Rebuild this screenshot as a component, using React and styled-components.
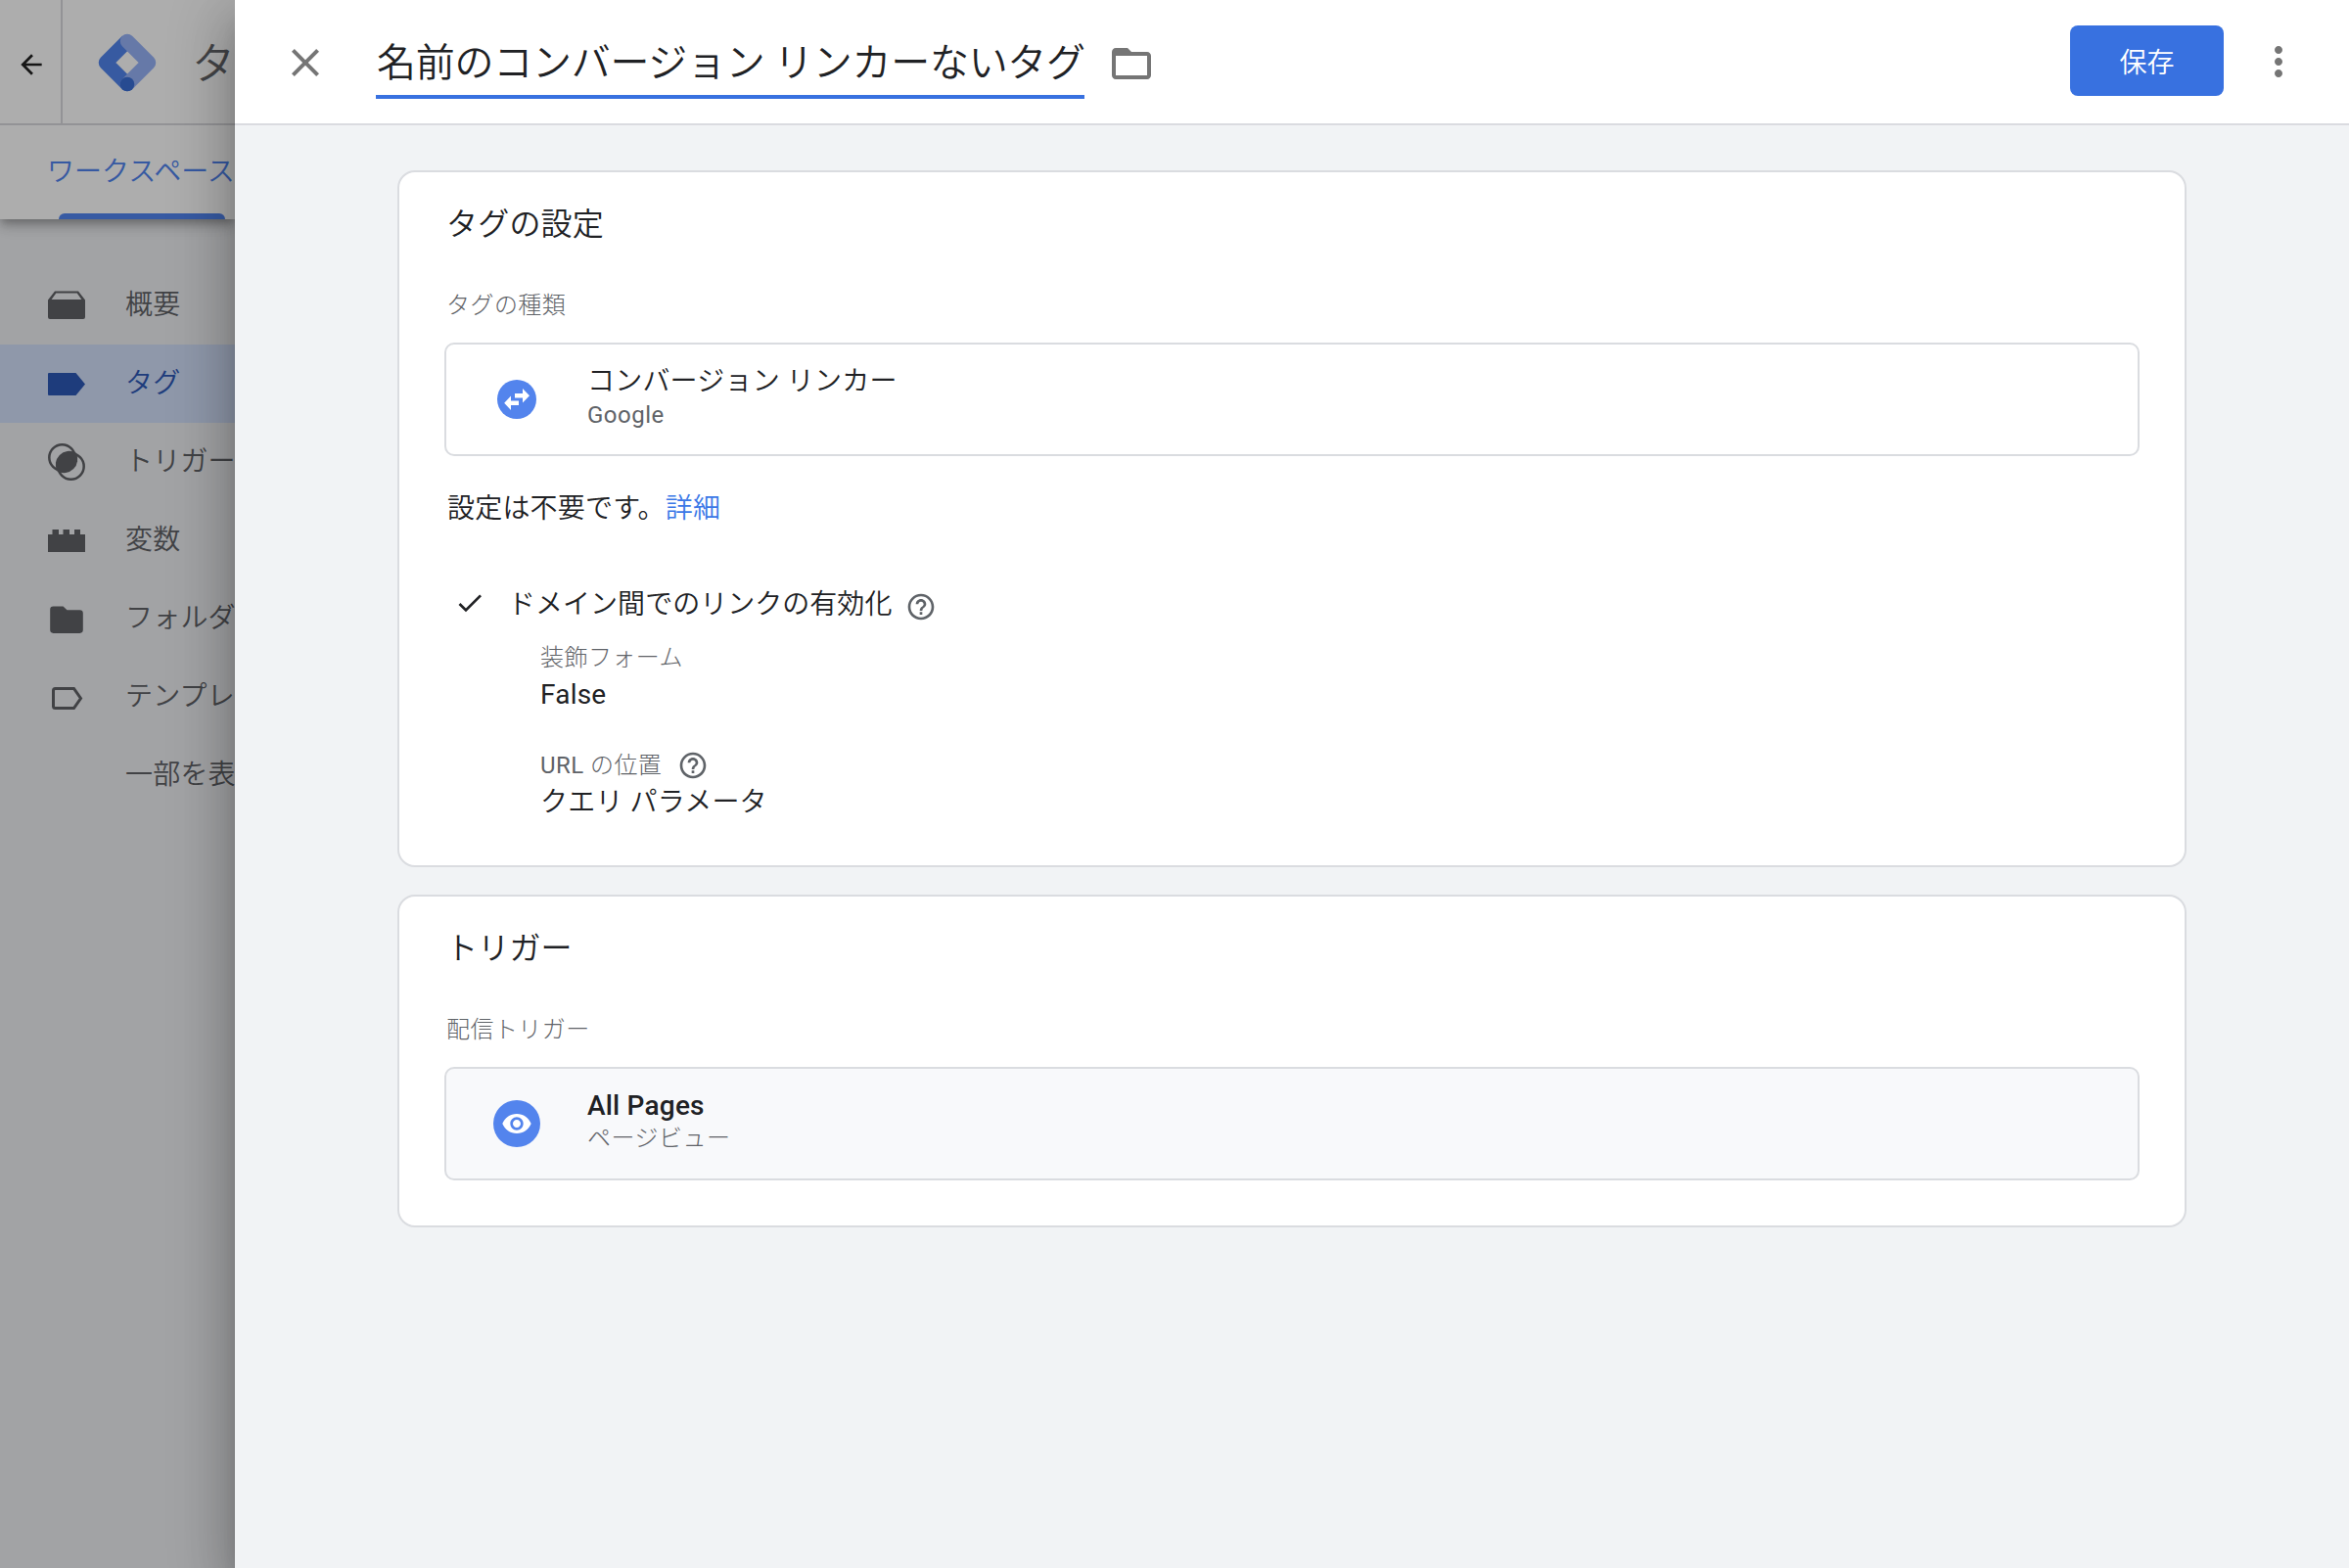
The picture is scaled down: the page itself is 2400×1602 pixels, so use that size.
import React from "react";
import styled, { createGlobalStyle } from "styled-components";

const GlobalStyle = createGlobalStyle`
  * {
    box-sizing: border-box;
  }

  body {
    margin: 0;
    font-family: Roboto, "Noto Sans CJK JP", sans-serif;
    font-weight: 350;
    font-size: 28px;
    letter-spacing: 0.2px;
    color: #202124;
    overflow: hidden;
  }
`;

const Page = styled.div`
  display: flex;
  width: 2400px;
  height: 1602px;
  overflow: hidden;
`;

const Sidebar = styled.aside`
  width: 240px;
  flex: none;
  overflow: hidden;
  background: #a2a3a5;
  white-space: nowrap;
`;

const SidebarTop = styled.div`
  background: #adadad;
  box-shadow: 0 4px 8px -2px rgba(0, 0, 0, 0.2),
    0 8px 10px 0 rgba(0, 0, 0, 0.14), 0 2px 20px 0 rgba(0, 0, 0, 0.12);
`;

const Brand = styled.div`
  display: flex;
  align-items: center;
  height: 128px;
  border-bottom: 2px solid #939396;
`;

const BackButton = styled.div`
  display: flex;
  align-items: center;
  width: 64px;
  height: 126px;
  padding: 6px 0 0 16px;
  flex: none;
  border-right: 2px solid #939396;
  color: #161616;
`;

const Logo = styled.svg`
  width: 60px;
  height: 60px;
  margin: 2px 0 0 36px;
  flex: none;
`;

const BrandName = styled.div`
  margin: 6px 0 0 36px;
  font-size: 44px;
  line-height: 60px;
  letter-spacing: 0;
  color: #434447;
`;

const Tab = styled.div`
  display: flex;
  flex-direction: column;
  justify-content: space-between;
  height: 96px;
  padding: 28px 0 0 48px;
  line-height: 40px;
  letter-spacing: 0;
  color: #3659a2;
`;

const TabBar = styled.div`
  width: 170px;
  height: 6px;
  margin-left: 12px;
  border-radius: 6px 6px 0 0;
  background: #375aa3;
`;

const Nav = styled.nav`
  padding-top: 48px;
`;

const NavItem = styled.div`
  display: flex;
  align-items: center;
  gap: 41px;
  height: 80px;
  padding-left: 49px;
  background: ${(props) => (props.$active ? "#8f98aa" : "transparent")};
  color: ${(props) => (props.$active ? "#1e3c7c" : "#414245")};

  svg {
    width: 38px;
    height: 38px;
    flex: none;
  }

  span {
    padding-bottom: 6px;
  }
`;

const Panel = styled.main`
  position: relative;
  flex: 1;
  background: #f1f3f5;
  box-shadow: 0 16px 20px -10px rgba(0, 0, 0, 0.2),
    0 32px 48px 4px rgba(0, 0, 0, 0.16), 0 12px 60px 10px rgba(0, 0, 0, 0.16);
`;

const Header = styled.header`
  display: flex;
  align-items: center;
  height: 128px;
  padding: 0 48px;
  border-bottom: 2px solid #dadbe0;
  background: #fff;
  color: #757575;
`;

const TitleField = styled.div`
  width: 724px;
  height: 70px;
  margin: 6px 24px 0 48px;
  padding: 6px 0 0 1px;
  border-bottom: 4px solid #3871e0;
  font-size: 40px;
  line-height: 56px;
  letter-spacing: -0.27px;
  white-space: nowrap;
  color: #202124;
`;

const SaveButton = styled.button`
  width: 157px;
  height: 72px;
  margin: 0 32px 2px auto;
  padding: 0 0 1px;
  border: none;
  border-radius: 8px;
  background: #3871e0;
  font: inherit;
  color: #fff;
`;

const Content = styled.div`
  display: flex;
  flex-direction: column;
  align-items: center;
  gap: 28px;
  padding-top: 46px;
`;

const Card = styled.section`
  width: 1828px;
  padding: 33px 46px ${(props) => props.$bottom}px;
  border: 2px solid #dadce0;
  border-radius: 18px;
  background: #fff;
`;

const CardTitle = styled.h2`
  margin: 0 0 47px 2px;
  font-size: 32px;
  font-weight: inherit;
  line-height: 40px;
`;

const Label = styled.div`
  display: flex;
  align-items: center;
  gap: 16px;
  font-size: 24px;
  font-weight: 300;
  line-height: 32px;
  letter-spacing: 0.45px;
  color: #5f6368;
`;

const Option = styled.div`
  display: flex;
  align-items: flex-start;
  gap: 48px;
  height: 116px;
  margin-top: 22px;
  padding-left: 48px;
  border: 2px solid #dadce0;
  border-radius: 10px;
  background: ${(props) => (props.$filled ? "#f8f9fb" : "#fff")};
`;

const OptionIcon = styled.svg`
  width: 48px;
  height: 48px;
  align-self: center;
`;

const OptionText = styled.div`
  padding-top: 22px;
  line-height: 32px;
`;

const OptionDetail = styled.div`
  margin-top: ${(props) => (props.$tight ? 1 : 2)}px;
  font-size: 24px;
  font-weight: 300;
  letter-spacing: 0.5px;
  color: #5f6368;
`;

const Latin = styled.span`
  font-weight: ${(props) => props.$weight || 400};
`;

const Note = styled.p`
  margin: 34px 0 58px 3px;
  line-height: 40px;
`;

const Link = styled.a`
  color: #3b78e7;
`;

const CheckRow = styled.div`
  display: flex;
  align-items: center;
  height: 40px;
  padding-left: 10px;
`;

const CheckLabel = styled.div`
  margin: 0 14px 6px 23px;
  letter-spacing: 0.03px;
`;

const Fields = styled.dl`
  margin: 18px 0 0 98px;
`;

const Field = styled.div`
  & + & {
    margin-top: 40px;
  }

  dd {
    margin: 6px 0 0;
    line-height: 32px;
  }
`;

const Icon = ({ size = 48, top = 0, children }) => (
  <svg
    width={size}
    height={size}
    viewBox="0 0 24 24"
    fill="currentColor"
    style={{ marginTop: top, flex: "none" }}
  >
    {children}
  </svg>
);

const HelpIcon = ({ top }) => (
  <svg
    width="32"
    height="32"
    viewBox="0 0 24 24"
    fill="#5f6368"
    style={{ marginTop: top }}
  >
    <path d="M11 18h2v-2h-2v2zm1-16C6.480 2 2 6.480 2 12s4.480 10 10 10 10-4.480 10-10S17.520 2 12 2zm0 18c-4.410 0-8-3.590-8-8s3.590-8 8-8 8 3.590 8 8-3.590 8-8 8zm0-14c-2.210 0-4 1.790-4 4h2c0-1.100.9-2 2-2s2 .9 2 2c0 2-3 1.750-3 5h2c0-2.250 3-2.500 3-5 0-2.210-1.790-4-4-4z" />
  </svg>
);

const navItems = [
  {
    label: "概要",
    icon: (
      <path
        fillRule="evenodd"
        d="M7 4.500h24L38 13.400V31a2 2 0 0 1-2 2H2a2 2 0 0 1-2-2V13.400zM8.300 6.500 3.600 13h30.800L29.700 6.500z"
      />
    ),
  },
  {
    label: "タグ",
    active: true,
    icon: <path d="M1 8h27.500L38 19.500 28.500 31H1a1 1 0 0 1-1-1V9a1 1 0 0 1 1-1z" />,
  },
  {
    label: "トリガー",
    icon: (
      <>
        <g fill="none" stroke="currentColor" strokeWidth="2.500">
          <circle cx="14.500" cy="14.500" r="13.200" />
          <circle cx="23.500" cy="23.500" r="13.200" />
        </g>
        <path d="M28.500 9.500A14 14 0 0 1 9.500 28.500 14 14 0 0 1 28.500 9.500z" />
      </>
    ),
  },
  {
    label: "変数",
    icon: <path d="M0 13h4.500V8h6.500v5h4.500V8H22v5h5V8h6v5h5v18H0z" />,
  },
  {
    label: "フォルダ",
    icon: (
      <path d="M5.500 6.500h10l4 3.800h13a3.300 3.300 0 0 1 3.300 3.300v17a3.300 3.300 0 0 1-3.300 3.300h-27a3.300 3.300 0 0 1-3.300-3.300V9.800a3.300 3.300 0 0 1 3.300-3.300z" />
    ),
  },
  {
    label: "テンプレ",
    icon: (
      <path
        d="M7.500 10.500h19L33.500 20.500 26.500 30.500h-19a2 2 0 0 1-2-2v-16a2 2 0 0 1 2-2z"
        fill="none"
        stroke="currentColor"
        strokeWidth="3"
      />
    ),
  },
  { label: "一部を表", icon: null },
];

const App = () => (
  <>
    <GlobalStyle />
    <Page lang="ja">
      <Sidebar>
        <SidebarTop>
          <Brand>
            <BackButton>
              <Icon size={32}>
                <path d="M20 11H7.830l5.590-5.590L12 4l-8 8 8 8 1.410-1.410L7.830 13H20v-2z" />
              </Icon>
            </BackButton>
            <Logo viewBox="0 0 60 60" fill="none">
              <path
                d="M30 52 8 30 30 8"
                stroke="#375aa1"
                strokeWidth="14.500"
                strokeLinejoin="round"
              />
              <path
                d="M30 8 52 30 30 52"
                stroke="#6679a8"
                strokeWidth="14.500"
                strokeLinejoin="round"
                strokeLinecap="round"
              />
              <circle cx="30" cy="52" r="7.300" fill="#274b91" />
            </Logo>
            <BrandName>タ</BrandName>
          </Brand>
          <Tab>
            ワークスペース
            <TabBar />
          </Tab>
        </SidebarTop>
        <Nav>
          {navItems.map((item) => (
            <NavItem key={item.label} $active={item.active}>
              <svg viewBox="0 0 38 38" fill="currentColor">
                {item.icon}
              </svg>
              <span>{item.label}</span>
            </NavItem>
          ))}
        </Nav>
      </Sidebar>
      <Panel>
        <Header>
          <Icon top={2}>
            <path d="M19 6.410 17.590 5 12 10.590 6.410 5 5 6.410 10.590 12 5 17.590 6.410 19 12 13.410 17.590 19 19 17.590 13.410 12z" />
          </Icon>
          <TitleField>名前のコンバージョン リンカーないタグ</TitleField>
          <Icon top={4}>
            <path d="M20 6h-8l-2-2H4c-1.100 0-1.990.9-1.990 2L2 18c0 1.100.9 2 2 2h16c1.100 0 2-.9 2-2V8c0-1.100-.9-2-2-2zm0 12H4V8h16v10z" />
          </Icon>
          <SaveButton>保存</SaveButton>
          <Icon>
            <path d="M12 8c1.100 0 2-.9 2-2s-.9-2-2-2-2 .9-2 2 .9 2 2 2zm0 2c-1.100 0-2 .9-2 2s.9 2 2 2 2-.9 2-2-.9-2-2-2zm0 6c-1.100 0-2 .9-2 2s.9 2 2 2 2-.9 2-2-.9-2-2-2z" />
          </Icon>
        </Header>
        <Content>
          <Card $bottom={48}>
            <CardTitle>タグの設定</CardTitle>
            <Label style={{ marginLeft: 2 }}>タグの種類</Label>
            <Option>
              <OptionIcon viewBox="0 0 48 48">
                <circle cx="24" cy="24" r="20" fill="#5384ed" />
                <path
                  d="M22 18h8v-5l7 7.300-7 7.300v-5h-8zM26 25.500v4.500h-8v5l-6.800-7.300L18 20.500v5z"
                  fill="#fff"
                />
              </OptionIcon>
              <OptionText>
                <div>コンバージョン リンカー</div>
                <OptionDetail>
                  <Latin>Google</Latin>
                </OptionDetail>
              </OptionText>
            </Option>
            <Note>
              設定は不要です。<Link>詳細</Link>
            </Note>
            <CheckRow>
              <Icon size={32} top={-4}>
                <path d="M9 16.170 4.830 12l-1.420 1.410L9 19 21 7l-1.410-1.410z" />
              </Icon>
              <CheckLabel>ドメイン間でのリンクの有効化</CheckLabel>
              <HelpIcon top={4} />
            </CheckRow>
            <Fields>
              <Field>
                <Label as="dt">装飾フォーム</Label>
                <dd>
                  <Latin>False</Latin>
                </dd>
              </Field>
              <Field>
                <Label as="dt">
                  <span>
                    <Latin>URL</Latin> の位置
                  </span>
                  <HelpIcon />
                </Label>
                <dd>クエリ パラメータ</dd>
              </Field>
            </Fields>
          </Card>
          <Card $bottom={46}>
            <CardTitle>トリガー</CardTitle>
            <Label style={{ marginLeft: 2 }}>配信トリガー</Label>
            <Option $filled>
              <OptionIcon viewBox="0 0 48 48">
                <circle cx="24" cy="24" r="24" fill="#5384ed" />
                <path
                  transform="translate(8 8) scale(1.333)"
                  d="M12 4.500C7 4.500 2.730 7.610 1 12c1.730 4.390 6 7.500 11 7.500s9.270-3.110 11-7.500c-1.730-4.390-6-7.500-11-7.500zM12 17c-2.760 0-5-2.240-5-5s2.240-5 5-5 5 2.240 5 5-2.240 5-5 5zm0-8c-1.660 0-3 1.340-3 3s1.340 3 3 3 3-1.340 3-3-1.340-3-3-3z"
                  fill="#fff"
                />
              </OptionIcon>
              <OptionText>
                <Latin $weight={500}>All Pages</Latin>
                <OptionDetail $tight>ページビュー</OptionDetail>
              </OptionText>
            </Option>
          </Card>
        </Content>
      </Panel>
    </Page>
  </>
);

export default App;
